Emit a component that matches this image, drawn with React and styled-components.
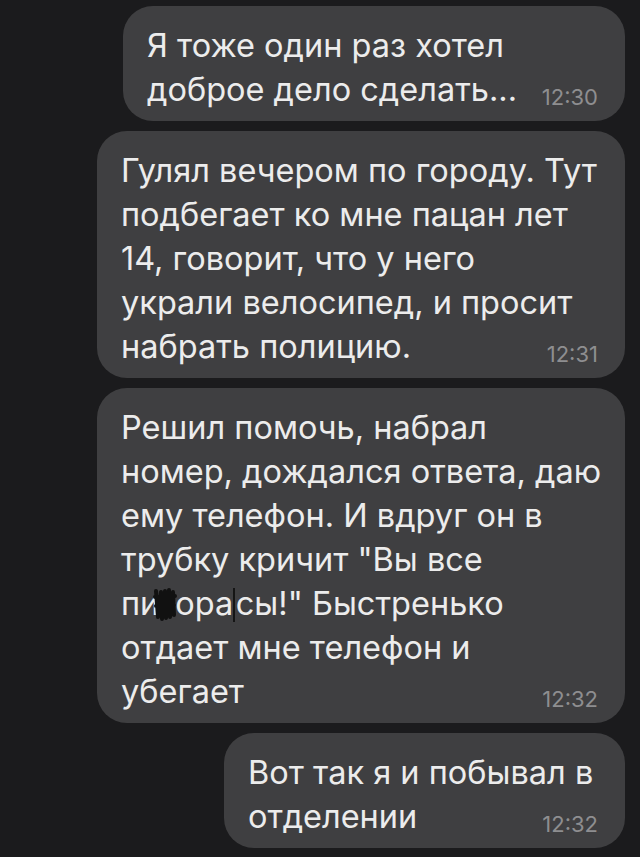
import React from 'react';
import styled, { createGlobalStyle } from 'styled-components';

const GlobalStyle = createGlobalStyle`
  html, body {
    margin: 0;
    padding: 0;
    background: #1b1b1d;
  }
  body {
    font-family: Inter, "Open Sans", "Liberation Sans", sans-serif;
  }
`;

const messages = [
  {
    time: '12:30',
    width: 502,
    lines: ['Я тоже один раз хотел', 'доброе дело сделать...'],
  },
  {
    time: '12:31',
    width: 528,
    lines: [
      'Гулял вечером по городу. Тут',
      'подбегает ко мне пацан лет',
      '14, говорит, что у него',
      'украли велосипед, и просит',
      'набрать полицию.',
    ],
  },
  {
    time: '12:32',
    width: 528,
    lines: [
      'Решил помочь, набрал',
      'номер, дождался ответа, даю',
      'ему телефон. И вдруг он в',
      'трубку кричит "Вы все',
      'censored',
      'отдает мне телефон и',
      'убегает',
    ],
  },
  {
    time: '12:32',
    width: 401,
    lines: ['Вот так я и побывал в', 'отделении'],
  },
];

const Chat = styled.div`
  display: flex;
  flex-direction: column;
  align-items: flex-end;
  gap: 10px;
  padding: 6px 15px 9px 0;
  min-height: 857px;
  box-sizing: border-box;
  background: #1b1b1d;
`;

const Bubble = styled.div`
  position: relative;
  box-sizing: border-box;
  width: ${(p) => p.$width}px;
  padding: 18px 28px 9px 24px;
  background: #3f3f41;
  border-radius: 30px;
  color: #ececec;
  font-size: 32.5px;
  line-height: 44px;
  letter-spacing: 0;
`;

const Line = styled.div`
  white-space: nowrap;
`;

const Time = styled.span`
  position: absolute;
  right: 27px;
  bottom: 12px;
  font-size: 22px;
  line-height: 24px;
  color: #8e8e90;
`;

const Censor = styled.span`
  display: inline-block;
  position: relative;
  width: 16px;
  height: 1px;
`;

const Scribble = styled.svg`
  position: absolute;
  left: -8px;
  top: -28px;
  width: 28px;
  height: 36px;
`;

const Caret = styled.span`
  display: inline-block;
  width: 1.5px;
  height: 34px;
  margin: 0 1px -7px 0;
  background: #151515;
`;

const CensoredLine = () => (
  <Line>
    пи
    <Censor>
      <Scribble viewBox="0 0 28 36">
        <path
          d="M5 5 L7 31 L10 6 L11 33 L14 5 L15 32 L18 4 L19 31 L22 6 L23 29 M4 11 L24 10 M5 20 L23 19"
          stroke="#111"
          strokeWidth="4"
          fill="none"
          strokeLinecap="round"
          strokeLinejoin="round"
        />
      </Scribble>
    </Censor>
    ора
    <Caret />
    сы!" Быстренько
  </Line>
);

const App = () => (
  <>
    <GlobalStyle />
    <Chat>
      {messages.map((m, i) => (
        <Bubble key={i} $width={m.width}>
          {m.lines.map((l, j) =>
            l === 'censored' ? <CensoredLine key={j} /> : <Line key={j}>{l}</Line>
          )}
          <Time>{m.time}</Time>
        </Bubble>
      ))}
    </Chat>
  </>
);

export default App;
